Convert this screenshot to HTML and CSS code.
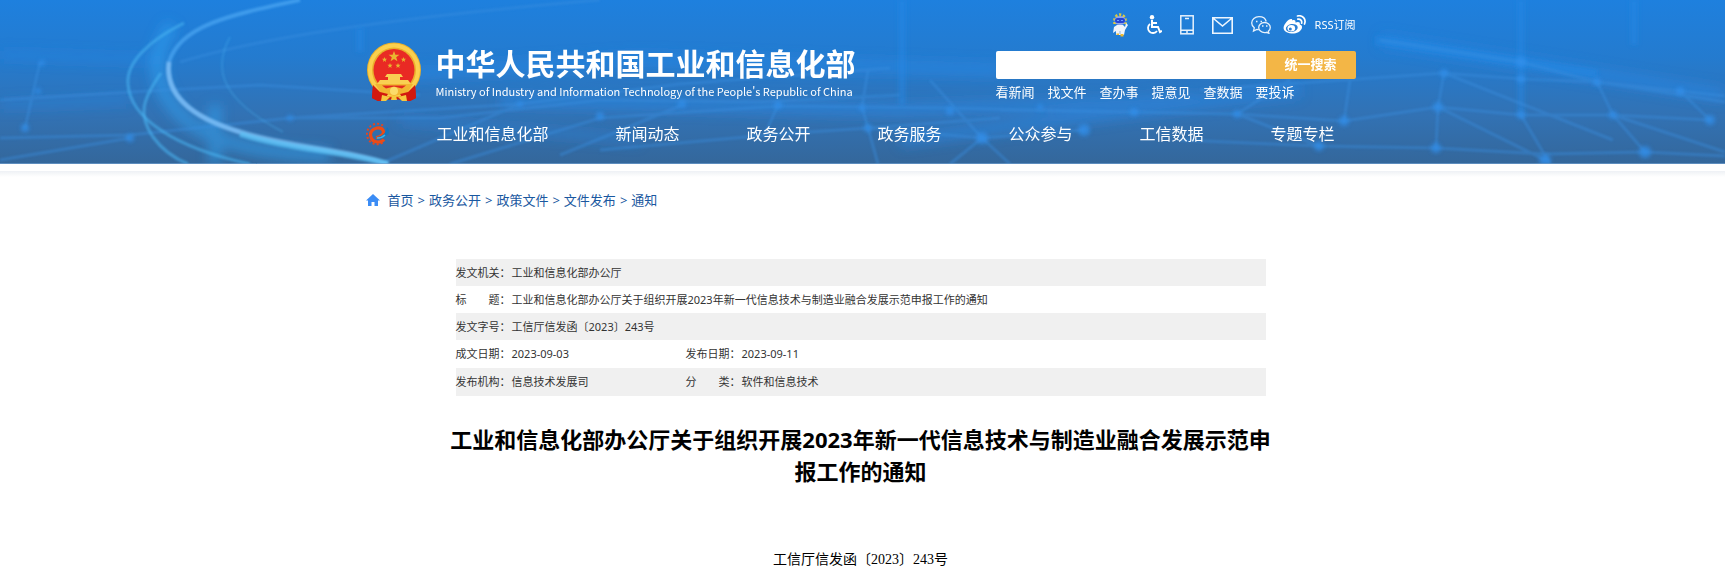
FILE: index.html
```html
<!DOCTYPE html>
<html lang="zh-CN">
<head>
<meta charset="utf-8">
<title>工业和信息化部办公厅关于组织开展2023年新一代信息技术与制造业融合发展示范申报工作的通知</title>
<link rel="stylesheet" href="styles.css">
</head>
<body>
<header class="site-header">
  <svg class="header-art" viewBox="0 0 1725 164" preserveAspectRatio="none" aria-hidden="true">
    <defs>
      <linearGradient id="sky" x1="0" y1="0" x2="0" y2="1">
        <stop offset="0" stop-color="#1e80de"/><stop offset=".35" stop-color="#247bcf"/><stop offset=".7" stop-color="#3272b4"/><stop offset="1" stop-color="#34679b"/>
      </linearGradient>
      <filter id="soft" x="-10%" y="-20%" width="120%" height="140%"><feGaussianBlur stdDeviation="1"/></filter>
      <filter id="softer" x="-10%" y="-20%" width="120%" height="140%"><feGaussianBlur stdDeviation="2"/></filter>
      <filter id="haze" x="-50%" y="-50%" width="200%" height="200%"><feGaussianBlur stdDeviation="6"/></filter>
    </defs>
    <rect width="1725" height="164" fill="url(#sky)"/>
    <g filter="url(#haze)" fill="none" stroke="#2a8ae8">
      <path d="M380 75 L640 60 L1000 70 M500 100 L900 110 L1200 100 M900 140 L1300 90 M1380 40 L1600 75 L1725 95" stroke-width="14" opacity=".5"/>
      <path d="M0 55 L160 60 M0 105 L130 100 M400 120 L640 140" stroke-width="10" opacity=".35"/>
      <path d="M172 25 Q140 70 178 112 T330 155 M215 105V164" stroke="#2fa5f5" stroke-width="14" opacity=".5"/>
    </g>
    <g filter="url(#softer)" fill="none" stroke="#2589e6">
      <path d="M902 0V105 M1521 0V115 M1634 0V45 M360 28V52" stroke-width="7" opacity=".45"/>
      <path d="M1375 40 L1521 62 L1597 74" stroke-width="9" opacity=".5"/>
    </g>
    <g filter="url(#soft)" fill="none" stroke="#3b8fe0" stroke-width="3" opacity=".42">
      <path d="M0 138 L130 135 L290 118 L440 118 L600 100 L760 102 L900 95"/>
      <path d="M0 100 L130 92 L260 85 L420 95 M25 128 L40 62 M0 160 L130 138"/>
      <path d="M180 62 Q300 25 600 0 M290 118 L520 104 L680 84 L890 68"/>
      <path d="M600 118 L780 106 L950 108 L1134 112 L1237 114 M600 150 L780 134 L868 128 L1000 118"/>
      <path d="M380 164 L520 104 M450 164 L600 118 M560 155 L680 106 M868 70 L862 107 L868 128 L878 164"/>
      <path d="M778 105 L765 134 M868 128 L982 138 L1084 130 M982 138 L950 164 M982 138 L1010 164 M930 80 L982 138"/>
      <path d="M1000 110 L1237 114 L1344 121 L1438 107 L1521 115 L1613 115 L1710 120"/>
      <path d="M1200 90 L1444 73 L1521 79 L1597 82 L1725 102"/>
      <path d="M1180 140 L1319 146 L1436 148 L1545 154 L1645 152 L1725 156"/>
      <path d="M1380 40 L1521 62 L1597 82 L1680 91 L1725 96"/>
      <path d="M1237 114 L1290 80 M1344 121 L1350 80 M1237 114 L1319 146 M1444 73 L1438 107 L1436 148"/>
      <path d="M1438 107 L1545 160 M1521 115 L1550 164 M1597 82 L1613 115 L1645 152 M1444 73 L1613 140 M1613 115 L1725 152 M1680 91 L1710 120"/>
    </g>
    <g filter="url(#softer)" fill="#3190ec" opacity=".75">
      <circle cx="25" cy="128" r="4"/><circle cx="38" cy="91" r="3"/><circle cx="130" cy="138" r="4"/><circle cx="42" cy="63" r="3"/>
      <circle cx="290" cy="118" r="3"/><circle cx="520" cy="104" r="3"/><circle cx="600" cy="116" r="4"/>
      <circle cx="682" cy="104" r="4"/><circle cx="778" cy="105" r="4"/><circle cx="862" cy="108" r="3"/><circle cx="868" cy="128" r="4"/>
      <circle cx="950" cy="111" r="4"/><circle cx="982" cy="138" r="6"/><circle cx="1084" cy="130" r="6"/><circle cx="1040" cy="107" r="3"/><circle cx="1134" cy="112" r="4"/>
      <circle cx="1237" cy="114" r="4"/><circle cx="1344" cy="121" r="5"/><circle cx="1319" cy="146" r="5"/><circle cx="1444" cy="73" r="4"/>
      <circle cx="1438" cy="107" r="5"/><circle cx="1436" cy="148" r="5"/><circle cx="1521" cy="62" r="5"/><circle cx="1521" cy="79" r="4"/>
      <circle cx="1521" cy="115" r="4"/><circle cx="1597" cy="82" r="4"/><circle cx="1680" cy="91" r="4"/><circle cx="1613" cy="115" r="4"/>
      <circle cx="1710" cy="120" r="5"/><circle cx="1645" cy="152" r="6"/><circle cx="1545" cy="160" r="6"/>
    </g>
    <g filter="url(#soft)" fill="none" stroke="#49b4f2">
      <path d="M184 23 C150 40 126 62 128 84 C130 118 175 148 250 164" stroke-width="3" opacity=".6"/>
      <path d="M161 73 C142 100 138 115 153 137 Q166 155 188 164" stroke-width="3" opacity=".6"/>
      <path d="M230 37 C212 70 222 100 283 132" stroke-width="2" opacity=".3"/>
      <path d="M300 0 C230 15 180 25 169 62 C164 100 200 120 240 132" stroke="#4ba6f2" stroke-width="4" opacity=".75"/>
      <path d="M169 62 C164 100 200 120 240 132 C290 148 350 150 388 164" stroke="#86c0f5" stroke-width="5" opacity=".7"/>
      <path d="M240 134 C290 150 340 150 388 164" stroke="#5ccbff" stroke-width="6" opacity=".6"/>
    </g>
    <path d="M0 163.500H1725" stroke="#6f9fce" opacity=".7"/>
  </svg>
  <div class="wrap header-inner">
    <div class="masthead">
      <a class="brand" href="#">
        <svg class="emblem" viewBox="0 0 56 60" aria-hidden="true">
          <path d="M7 42 L6 56 L12 59 L28 57 L44 59 L50 56 L49 42 L28 48Z" fill="#d3190f"/>
          <ellipse cx="28" cy="28" rx="27" ry="27.500" fill="#eab02c"/>
          <ellipse cx="28" cy="28" rx="24" ry="24.500" fill="none" stroke="#fbd04e" stroke-width="4"/>
          <ellipse cx="28" cy="28" rx="20.500" ry="21" fill="#e92a24"/>
          <g fill="#e9b530">
            <path d="M28 9l1.400 3.800h4l-3.200 2.500 1.200 4-3.400-2.400-3.400 2.400 1.200-4-3.200-2.500h4z"/>
            <path id="star" d="M18.500 15l.7 1.800h1.900l-1.500 1.200.5 1.900-1.600-1.100-1.600 1.100.5-1.900-1.500-1.200h1.900z"/>
            <use href="#star" x="19"/><use href="#star" x="5.500" y="6"/><use href="#star" x="13.500" y="6"/>
          </g>
          <path d="M21 32h14l2 3H19zM22 35h12v3h8l3 4H11l3-4h8z" fill="#f9cf52"/>
          <path d="M9 42h38l-6 9-13 3-13-3z" fill="#f2b632"/>
          <path d="M16 43.500h24l-4 3-8-2-8 2z" fill="#e12a20"/>
          <path d="M7 43l7 7 8 2-4 6-6 1-6-3zM49 43l-7 7-8 2 4 6 6 1 6-3z" fill="#d3190f"/>
          <circle cx="28" cy="49" r="4" fill="#fbdc6a"/>
          <path d="M16 53l8 2-4 4-5 0zM40 53l-8 2 4 4 5 0zM26 54h4l1 4h-6z" fill="#f6c93f"/>
        </svg>
        <span class="brand-text">
          <span class="brand-cn">中华人民共和国工业和信息化部</span>
          <span class="brand-en">Ministry of Industry and Information Technology of the People's Republic of China</span>
        </span>
      </a>
      <div class="tools">
        <div class="quick-icons">
          <a href="#" aria-label="智能问答"><svg width="16" height="24" viewBox="0 0 16 24"><path d="M3 11V7a5 5 0 0 1 10 0v4" fill="none" stroke="#f2d02c" stroke-width="3.500" stroke-dasharray="2 1.600" opacity=".9"/><path d="M5 12H11L13 14 14 10 16 12 13 17 12 22H4V18L1 20 2 14z" fill="#eef4fc"/><ellipse cx="8" cy="7.500" rx="5.500" ry="4.500" fill="#8fa5e8"/><rect x="3" y="5" width="10" height="5" rx="2.500" fill="#2445d4"/><path d="M5 7.500h2M9 7.500h2" stroke="#6aa4ff"/><path d="M8 18v3" stroke="#8fb4e4"/><path d="M4.500 20.500h2.500V22H4.500zM8.500 21h3v2.500h-3z" fill="#f0b92c"/></svg></a>
          <a href="#" aria-label="无障碍"><svg width="16" height="20" viewBox="0 0 16 20"><circle cx="6" cy="2.200" r="2.200" fill="#fff"/><path d="M6 5v7h6l2 5 2-1M6 8h5" fill="none" stroke="#fff" stroke-width="2"/><path d="M4 9a5 5 0 1 0 7 7" fill="none" stroke="#fff" stroke-width="1.800"/></svg></a>
          <a href="#" aria-label="手机版"><svg width="14" height="20" viewBox="0 0 14 20" fill="none" stroke="#e6f1fc" stroke-width="1.500"><rect x=".8" y=".8" width="12.400" height="18"/><path d="M1 15.200h12M5 3.500h4M6 17h2"/></svg></a>
          <a href="#" aria-label="邮箱"><svg width="21" height="17" viewBox="0 0 21 17" fill="none" stroke="#eef6fe" stroke-width="1.600"><path d="M.8.800h19.400v15.400H.8zM1.500 1.500l9 7.500 9-7.500"/></svg></a>
          <a href="#" aria-label="微信"><svg width="20" height="18" viewBox="0 0 20 18" fill="none" stroke="#e6f1fc" stroke-width="1.300"><path d="M15.200 5.500C14.500 2.500 11.500.7 8 .7 4 .7.700 3.400.7 7c0 2 1 3.600 2.600 4.800L2.500 15l3.300-1.700 2 .3"/><path d="M13.500 6.500c3.300 0 5.800 2.300 5.800 5 0 1.600-.8 2.900-2 3.800l.6 2-2.300-1a7 7 0 0 1-2.100.3c-3.200 0-5.800-2.300-5.800-5.100s2.600-5 5.800-5z"/><path d="M5 5.500h1.500M9.500 5.500H11M11 10h1.500M15 10h1.500" stroke-width="1.700"/></svg></a>
          <a class="weibo" href="#" aria-label="微博"><svg width="23" height="20" viewBox="0 0 23 20"><path d="M9 5.500C11 4.600 13 5 12.400 7.600c2.600-1 5-.8 4.400 1.900 2 .6 2.700 2 2 3.900-1.300 3.400-5.800 5.500-10.400 5.100C3.500 18.200.3 15.800.6 12.600.900 9.200 5.400 4 8 4c1.200 0 1.500.7 1 1.500z" fill="#fff"/><ellipse cx="8.800" cy="13" rx="6" ry="4" fill="#2b7fd3" transform="rotate(-10 8.800 13)"/><ellipse cx="8.300" cy="13.300" rx="3.800" ry="3.200" fill="#fff"/><circle cx="7.300" cy="14" r="1.500" fill="#2b7fd3"/><path d="M14.500 1C19.500-.2 23.500 4 21.500 9M14.800 4.200c2.600-.5 4.500 1.400 3.800 4" fill="none" stroke="#fff" stroke-width="1.700" stroke-linecap="round"/></svg></a>
          <a class="rss" href="#">RSS订阅</a>
        </div>
        <form class="search">
          <input class="search-input" type="text" aria-label="搜索关键词">
          <button class="search-button" type="button">统一搜索</button>
        </form>
        <div class="shortcuts">
          <a href="#">看新闻</a><a href="#">找文件</a><a href="#">查办事</a><a href="#">提意见</a><a href="#">查数据</a><a href="#">要投诉</a>
        </div>
      </div>
    </div>
    <nav class="main-nav">
      <a class="nav-logo" href="#" aria-label="首页"><svg width="24" height="24" viewBox="0 0 24 24" fill="none"><path d="M17 3.500A10.300 10.300 0 1 0 17 20.500" stroke="#e8451c" stroke-width="2" stroke-dasharray="2 2.200"/><path d="M10 15.500Q17 15 17.500 10Q17 5.500 11 6Q4.500 7.500 4.500 13Q5.500 20 12 20Q16 20 18 17.500" stroke="#ec4b16" stroke-width="3.200"/><path d="M10 15.500Q20 14 21 5Q26 10 20 14Q15 17.500 10 15.500z" fill="#1474bd"/><path d="M11 16Q16 16 19 13" stroke="#35b3ea" stroke-width="1.500"/></svg></a>
      <a href="#">工业和信息化部</a><a href="#">新闻动态</a><a href="#">政务公开</a><a href="#">政务服务</a><a href="#">公众参与</a><a href="#">工信数据</a><a href="#">专题专栏</a>
    </nav>
  </div>
</header>
<main class="page">
  <div class="wrap">
    <nav class="crumbs" aria-label="当前位置">
      <svg width="14" height="12" viewBox="0 0 14 12" aria-hidden="true"><path d="M7 0l7 6.500h-2V12H8.500V8h-3v4H2V6.500H0z" fill="#3b8cf5"/></svg>
      <a href="#">首页</a><span>&gt;</span><a href="#">政务公开</a><span>&gt;</span><a href="#">政策文件</a><span>&gt;</span><a href="#">文件发布</a><span>&gt;</span><a href="#">通知</a>
    </nav>
    <article class="article">
      <table class="meta">
        <tr><th scope="row">发文机关：</th><td colspan="3">工业和信息化部办公厅</td></tr>
        <tr><th scope="row">标　　题：</th><td colspan="3">工业和信息化部办公厅关于组织开展2023年新一代信息技术与制造业融合发展示范申报工作的通知</td></tr>
        <tr><th scope="row">发文字号：</th><td colspan="3">工信厅信发函〔2023〕243号</td></tr>
        <tr class="pair"><th scope="row">成文日期：</th><td class="first">2023-09-03</td><th scope="row">发布日期：</th><td>2023-09-11</td></tr>
        <tr class="pair"><th scope="row">发布机构：</th><td class="first">信息技术发展司</td><th scope="row">分　　类：</th><td>软件和信息技术</td></tr>
      </table>
      <h1 class="title">工业和信息化部办公厅关于组织开展2023年新一代信息技术与制造业融合发展示范申报工作的通知</h1>
      <p class="doc-number">工信厅信发函〔2023〕243号</p>
    </article>
  </div>
</main>
</body>
</html>
```
FILE: styles.css
```css
* { box-sizing: border-box; }
body {
  margin: 0;
  background: #fff;
  color: #333;
  font-family: "Noto Sans", "Noto Sans CJK SC", sans-serif;
}
a { color: inherit; text-decoration: none; }
svg { display: block; }
.wrap { max-width: 994px; margin: 0 auto; padding-right: 4px; }

.site-header { position: relative; color: #fff; }
.header-art { position: absolute; inset: 0; width: 100%; height: 100%; }
.header-inner { position: relative; padding-top: 12px; padding-bottom: 17px; }
.masthead { display: flex; justify-content: space-between; align-items: flex-start; }
.brand { display: flex; align-items: center; gap: 14px; padding-top: 30px; }
.emblem { width: 56px; height: 60px; }
.brand-text { display: flex; flex-direction: column; padding-top: 4px; }
.brand-cn { font: 700 30px/34px "Liberation Sans", "Noto Sans CJK SC", sans-serif; }
.brand-en { font: 400 11px/18px "Noto Sans CJK SC", sans-serif; white-space: nowrap; }

.tools { width: 360px; }
.quick-icons { display: flex; align-items: center; justify-content: flex-end; gap: 18px; height: 26px; }
.weibo { margin-left: -6px; }
.rss { margin-left: -9px; font-size: 11px; line-height: 16px; white-space: nowrap; }
.search { display: flex; height: 28px; margin: 13px 0 4px; }
.search-input { flex: 1; min-width: 0; border: 0; padding: 0 8px; border-radius: 2px 0 0 2px; background: #fff; }
.search-button {
  width: 90px; border: 0; padding: 0 0 2px; border-radius: 0 2px 2px 0;
  background: #f3b646; color: #fff;
  font: 700 13px/26px "Noto Sans", "Noto Sans CJK SC", sans-serif;
}
.shortcuts { display: flex; gap: 13px; font-size: 13px; line-height: 18px; }

.main-nav { display: flex; align-items: center; gap: 67px; margin-top: 19px; font-size: 16px; line-height: 26px; }
.nav-logo { margin-right: -20px; }

.page { margin-top: 7px; padding-top: 19px; background: linear-gradient(#eef1f5, #fff 6px); }
.crumbs { display: flex; align-items: center; gap: 4px; color: #1a58a0; font-size: 13px; line-height: 20px; }
.crumbs svg { margin-right: 4px; }

.article { max-width: 822px; margin: 49px auto 0; text-align: center; }
.meta { width: calc(100% - 12px); margin: 0 auto; border-collapse: collapse; text-align: left; font-size: 11px; line-height: 17px; }
.meta tr:nth-child(odd) { background: #f0f0f0; }
.meta th, .meta td { padding: 5px 0; font-weight: 400; }
.meta .pair { line-height: 18px; }
.meta th { width: 56px; }
.meta .first { width: 174px; }
.title { margin: 27px 0 0; color: #000; font-size: 22px; line-height: 32px; font-weight: 700; }
.doc-number { margin: 61px 0 8px; color: #000; font: 14px/24px "Liberation Serif", "Noto Sans CJK SC", serif; }
```
